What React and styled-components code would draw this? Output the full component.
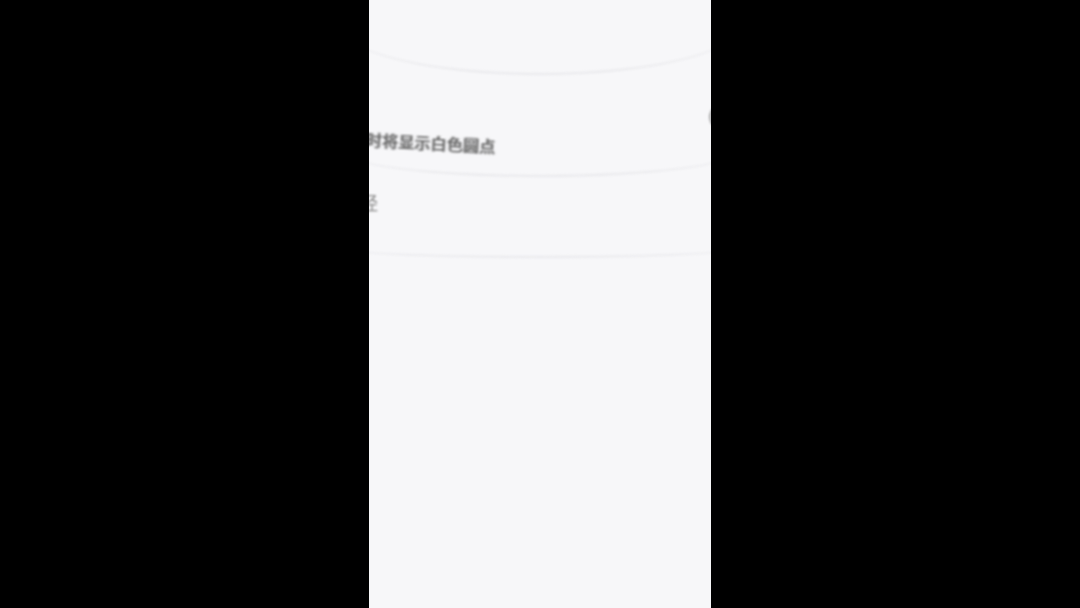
import styled, { createGlobalStyle } from 'styled-components';

const Global = createGlobalStyle`
  html, body {
    margin: 0;
    padding: 0;
    background: #000;
    height: 100%;
  }
  #root {
    height: 100%;
  }
`;

const Page = styled.div`
  display: flex;
  justify-content: center;
  height: 608px;
  background: #000;
`;

// phone screen (blurred settings list)
const Screen = styled.div`
  width: 342px;
  height: 100%;
  background: #f7f7f9;
  overflow: hidden;
  display: flex;
  flex-direction: column;
  font-family: "Noto Sans CJK SC", "Noto Sans", sans-serif;
`;

const Row = styled.div`
  position: relative;
  height: ${(p) => p.$h}px;
  display: flex;
  align-items: flex-start;
  flex-shrink: 0;

  &::after {
    content: '';
    position: absolute;
    left: -29px;
    right: -29px;
    bottom: 0;
    height: ${(p) => p.$sag}px;
    border-bottom: 2px solid #eaeaed;
    border-radius: 0 0 50% 50% / 0 0 ${(p) => p.$sag}px ${(p) => p.$sag}px;
    filter: blur(1px);
  }
`;

const Hint = styled.span`
  margin: 54px 0 0 -3px;
  font-size: 16px;
  font-weight: 500;
  line-height: 20px;
  color: #666;
  letter-spacing: 0.2px;
  white-space: nowrap;
  text-shadow: 1px 0 0 rgba(102, 102, 102, 0.45), -1px 0 0 rgba(102, 102, 102, 0.3);
  transform: rotate(3deg);
  transform-origin: left center;
  filter: blur(0.9px);
`;

const Label = styled.span`
  margin: 14px 0 0 -9px;
  font-size: 18px;
  line-height: 22px;
  color: #8a8a8a;
  filter: blur(1px);
`;

const Knob = styled.div`
  position: absolute;
  right: -22px;
  top: 30px;
  width: 20px;
  height: 20px;
  border-radius: 50%;
  border: 2px solid #a8a8a8;
  filter: blur(1.2px);
`;

export default function App() {
  return (
    <>
      <Global />
      <Page>
        <Screen>
          <Row $h={75} $sag={50} />
          <Row $h={102} $sag={27}>
            <Hint>时将显示白色圆点</Hint>
            <Knob />
          </Row>
          <Row $h={81} $sag={10}>
            <Label>经</Label>
          </Row>
        </Screen>
      </Page>
    </>
  );
}
